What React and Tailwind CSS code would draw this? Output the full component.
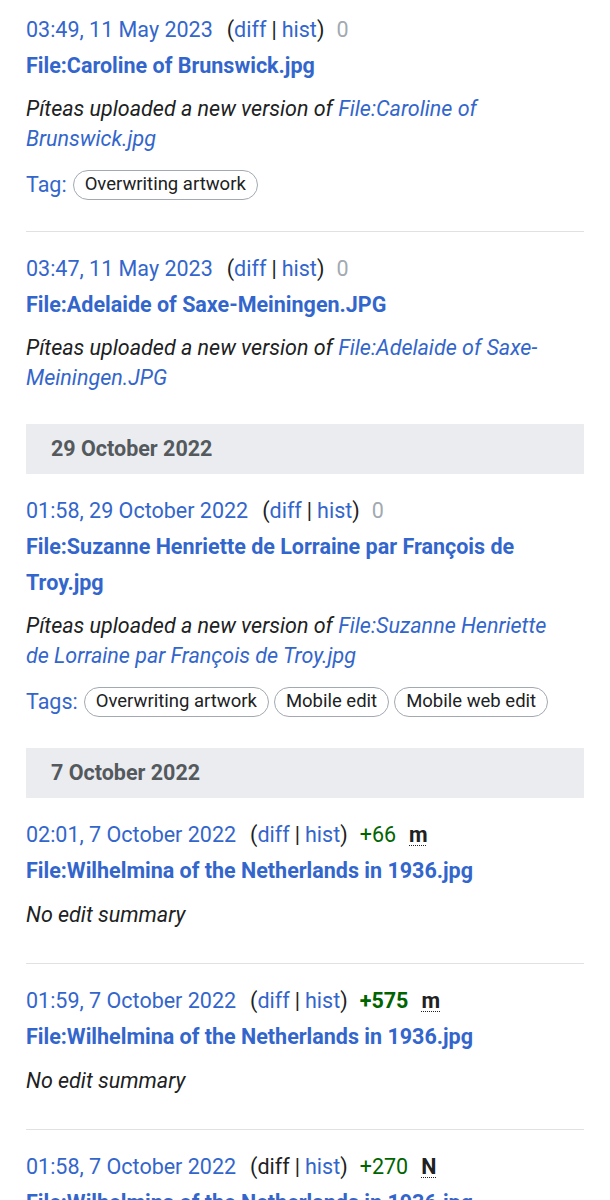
import React from 'react';

const entries = [
  {
    time: '03:49, 11 May 2023',
    size: '0',
    sizeKind: 'zero',
    title: 'File:Caroline of Brunswick.jpg',
    summary: { text: 'Píteas uploaded a new version of ', link: 'File:Caroline of Brunswick.jpg' },
    tags: ['Overwriting artwork'],
    border: true,
  },
  {
    time: '03:47, 11 May 2023',
    size: '0',
    sizeKind: 'zero',
    title: 'File:Adelaide of Saxe-Meiningen.JPG',
    summary: { text: 'Píteas uploaded a new version of ', link: 'File:Adelaide of Saxe-Meiningen.JPG' },
    border: false,
  },
  { header: '29 October 2022' },
  {
    time: '01:58, 29 October 2022',
    size: '0',
    sizeKind: 'zero',
    title: 'File:Suzanne Henriette de Lorraine par François de Troy.jpg',
    summary: {
      text: 'Píteas uploaded a new version of ',
      link: 'File:Suzanne Henriette de Lorraine par François de Troy.jpg',
    },
    tags: ['Overwriting artwork', 'Mobile edit', 'Mobile web edit'],
    border: false,
  },
  { header: '7 October 2022' },
  {
    time: '02:01, 7 October 2022',
    size: '+66',
    sizeKind: 'plus',
    flag: 'm',
    title: 'File:Wilhelmina of the Netherlands in 1936.jpg',
    noSummary: true,
    border: true,
  },
  {
    time: '01:59, 7 October 2022',
    size: '+575',
    sizeKind: 'big',
    flag: 'm',
    title: 'File:Wilhelmina of the Netherlands in 1936.jpg',
    noSummary: true,
    border: true,
  },
  {
    time: '01:58, 7 October 2022',
    size: '+270',
    sizeKind: 'plus',
    flag: 'N',
    plainDiff: true,
    title: 'File:Wilhelmina of the Netherlands in 1936.jpg',
    noSummary: true,
    border: false,
  },
];

const SizeBadge = ({ kind, value }) => {
  if (kind === 'zero') return <span className="text-[#a2a9b1]">{value}</span>;
  if (kind === 'big') return <span className="text-[#006400] font-bold">{value}</span>;
  return <span className="text-[#006400]">{value}</span>;
};

const Entry = ({ e }) => (
  <div
    className={`pt-[19px] ${e.noSummary ? 'pb-[33px]' : 'pb-[31px]'} ${
      e.border ? 'border-b-[1.5px] border-[#dfe1e5]' : ''
    }`}
  >
    {/* timestamp row */}
    <div className="flex items-center h-[36px] text-[21.5px] whitespace-nowrap">
      <span className="text-[#3366cc]">{e.time}</span>
      <span className="ml-[14px] text-[#202122]">(</span>
      <span className={e.plainDiff ? 'text-[#202122]' : 'text-[#3366cc]'}>diff</span>
      <span className="text-[#202122] mx-[5px]">|</span>
      <span className="text-[#3366cc]">hist</span>
      <span className="text-[#202122]">)</span>
      <span className="ml-[12px]">
        <SizeBadge kind={e.sizeKind} value={e.size} />
      </span>
      {e.flag && (
        <span className="ml-[13px] font-bold text-[#202122] underline decoration-dotted underline-offset-[3px] decoration-1">
          {e.flag}
        </span>
      )}
    </div>
    {/* page title */}
    <div className="text-[#3366cc] font-bold text-[21.5px] leading-[36px]">{e.title}</div>
    {/* summary */}
    {e.noSummary ? (
      <div className="mt-[11px] italic text-[21.5px] leading-[30px] text-[#202122]">No edit summary</div>
    ) : (
      <div className="mt-[10px] italic text-[21.5px] leading-[30px] text-[#202122] pr-[20px]">
        {e.summary.text}
        <span className="text-[#3366cc]">{e.summary.link}</span>
      </div>
    )}
    {e.tags && (
      <div className="mt-[16px] flex items-center gap-[5px] h-[30px]">
        <span className="text-[#3366cc] text-[21.5px] mr-[1px]">{e.tags.length > 1 ? 'Tags:' : 'Tag:'}</span>
        {e.tags.map((t) => (
          <span
            key={t}
            className="h-[30px] flex items-center px-[11px] rounded-full border border-[#a2a9b1] text-[18.5px] text-[#202122] whitespace-nowrap"
          >
            {t}
          </span>
        ))}
      </div>
    )}
  </div>
);

export default function App() {
  return (
    <div
      className="min-h-screen bg-white px-[26px] overflow-hidden"
      style={{ fontFamily: 'Roboto, "Liberation Sans", sans-serif' }}
    >
      <div className="-mt-[7px] flex flex-col">
        {entries.map((e, i) =>
          e.header ? (
            <div
              key={i}
              className="h-[50px] flex items-center bg-[#eaecf0] px-[25px] text-[21.5px] font-bold text-[#54595d]"
            >
              {e.header}
            </div>
          ) : (
            <Entry key={i} e={e} />
          )
        )}
      </div>
    </div>
  );
}
